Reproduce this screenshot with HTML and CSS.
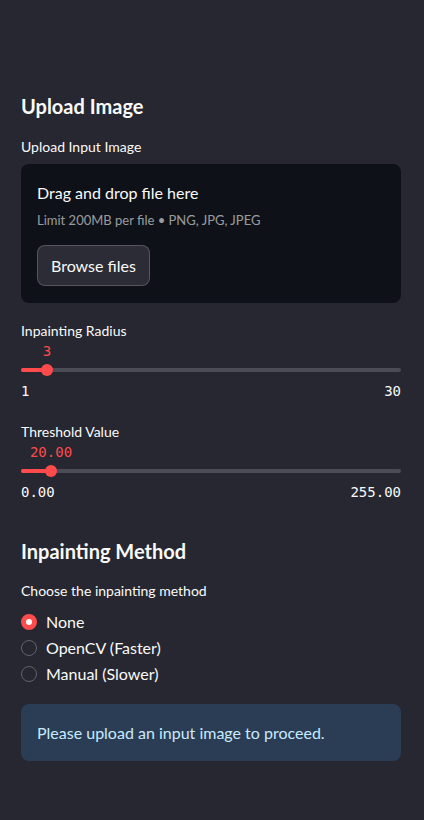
FILE: index.html
```html
<!DOCTYPE html>
<html lang="en">
<head>
<meta charset="utf-8">
<title>Inpainting</title>
<link rel="stylesheet" href="styles.css">
</head>
<body>
<aside class="sidebar">
  <h2 class="heading heading-first">Upload Image</h2>
  <div class="label">Upload Input Image</div>
  <section class="dropzone">
    <div class="drop-title">Drag and drop file here</div>
    <div class="drop-limit">Limit 200MB per file • PNG, JPG, JPEG</div>
    <button class="browse">Browse files</button>
  </section>

  <div class="slider slider-first">
    <div class="label">Inpainting Radius</div>
    <div class="value-row"><span class="value" style="left: 26px">3</span></div>
    <div class="track"><div class="fill" style="width: 26px"></div><div class="thumb" style="left: 26px"></div></div>
    <div class="ticks"><span>1</span><span>30</span></div>
  </div>

  <div class="slider">
    <div class="label">Threshold Value</div>
    <div class="value-row"><span class="value" style="left: 30px">20.00</span></div>
    <div class="track"><div class="fill" style="width: 30px"></div><div class="thumb" style="left: 30px"></div></div>
    <div class="ticks"><span>0.00</span><span>255.00</span></div>
  </div>

  <h2 class="heading heading-second">Inpainting Method</h2>
  <div class="label label-radio">Choose the inpainting method</div>
  <div class="radios">
    <div class="radio"><span class="dot dot-on"></span><span>None</span></div>
    <div class="radio"><span class="dot"></span><span>OpenCV (Faster)</span></div>
    <div class="radio"><span class="dot"></span><span>Manual (Slower)</span></div>
  </div>

  <div class="info">Please upload an input image to proceed.</div>
</aside>
</body>
</html>
```

FILE: styles.css
```css
html, body {
  margin: 0;
  padding: 0;
  background: #262730;
  height: 100%;
}

body {
  font-family: "Lato", "Noto Sans", sans-serif;
  color: #fafafa;
}

.sidebar {
  padding: 0 23px 0 21px;
  display: flex;
  flex-direction: column;
}

.heading {
  margin: 0;
  font-size: 20px;
  font-weight: 700;
  line-height: 30px;
  height: 30px;
}

.heading-first {
  margin-top: 91px;
}

.heading-second {
  margin-top: 34px;
}

.label {
  font-size: 14px;
  line-height: 20px;
  height: 20px;
}

.heading-first + .label {
  margin-top: 16px;
}

.dropzone {
  margin-top: 7px;
  background: #0e1117;
  border-radius: 8px;
  padding: 17px 16px 17px 16px;
  display: flex;
  flex-direction: column;
  align-items: flex-start;
}

.drop-title {
  font-size: 16px;
  line-height: 24px;
}

.drop-limit {
  margin-top: 5px;
  font-size: 13px;
  line-height: 20px;
  color: rgba(250, 250, 250, 0.6);
}

.browse {
  margin-top: 15px;
  height: 41px;
  padding: 0 13px;
  font-family: inherit;
  font-size: 16px;
  color: #fafafa;
  background: #2b2c36;
  border: 1px solid rgba(250, 250, 250, 0.2);
  border-radius: 8px;
}

.slider-first {
  margin-top: 18px;
}

.slider {
  display: flex;
  flex-direction: column;
}

.slider + .slider {
  margin-top: 21px;
}

.value-row {
  position: relative;
  height: 20px;
}

.value {
  position: absolute;
  top: 0;
  transform: translateX(-50%);
  font-family: "DejaVu Sans Mono", "Liberation Mono", monospace;
  font-size: 14px;
  line-height: 20px;
  color: #ff4b4b;
}

.track {
  position: relative;
  margin-top: 7px;
  height: 4px;
  border-radius: 2px;
  background: #4b4c56;
}

.fill {
  height: 4px;
  border-radius: 2px;
  background: #ff4b4b;
}

.thumb {
  position: absolute;
  top: -4px;
  width: 12px;
  height: 12px;
  margin-left: -6px;
  border-radius: 50%;
  background: #ff4b4b;
}

.ticks {
  margin-top: 9px;
  display: flex;
  justify-content: space-between;
  font-family: "DejaVu Sans Mono", "Liberation Mono", monospace;
  font-size: 14px;
  line-height: 20px;
  height: 20px;
}

.label-radio {
  margin-top: 15px;
}

.radios {
  margin-top: 11px;
  display: flex;
  flex-direction: column;
  gap: 6px;
}

.radio {
  display: flex;
  align-items: center;
  gap: 9px;
  font-size: 16px;
  line-height: 20px;
  height: 20px;
}

.dot {
  box-sizing: border-box;
  width: 16px;
  height: 16px;
  border-radius: 50%;
  border: 1px solid #62636b;
  background: #262730;
  flex-shrink: 0;
}

.dot-on {
  border: 5px solid #ff4b4b;
  background: #ffffff;
}

.info {
  margin-top: 20px;
  background: #2b3c55;
  border-radius: 8px;
  padding: 0 16px;
  height: 57px;
  display: flex;
  align-items: center;
  font-size: 16px;
  color: #c7ebff;
}
```
